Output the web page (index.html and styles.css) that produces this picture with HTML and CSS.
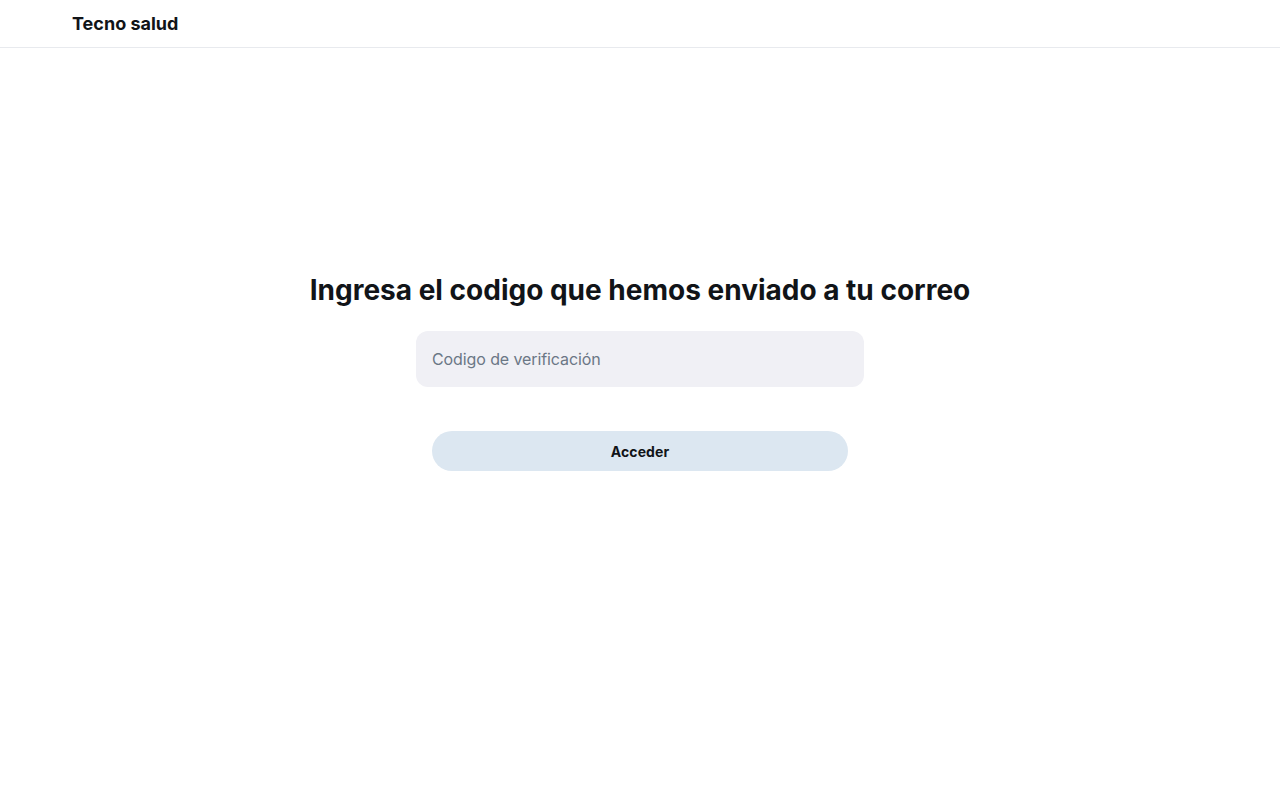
FILE: index.html
```html
<!DOCTYPE html>
<html lang="es">
<head>
<meta charset="utf-8">
<title>Tecno salud</title>
<link rel="stylesheet" href="styles.css">
</head>
<body>
<header class="topbar">
  <div class="brand">Tecno salud</div>
</header>
<main class="main">
  <div class="content">
    <h2 class="title">Ingresa el codigo que hemos enviado a tu correo</h2>
    <div class="field-row">
      <input class="field" type="text" placeholder="Codigo de verificación">
    </div>
    <div class="button-row">
      <button class="btn" type="button">Acceder</button>
    </div>
  </div>
</main>
</body>
</html>
```
FILE: styles.css
```css
* { box-sizing: border-box; }
html, body { margin: 0; padding: 0; background: #ffffff; }
body {
  font-family: Inter, "Noto Sans", sans-serif;
  color: #111418;
  min-height: 800px;
}
.topbar {
  height: 48px;
  border-bottom: 1px solid #e8eaee;
  display: flex;
  align-items: center;
  padding: 0 72px;
}
.brand {
  font-size: 18px;
  font-weight: 700;
  line-height: 23px;
}
.main {
  display: flex;
  justify-content: center;
  padding-top: 205px;
}
.content {
  width: 960px;
  display: flex;
  flex-direction: column;
  align-items: center;
}
.title {
  margin: 0;
  padding: 20px 16px 11px;
  font-size: 28px;
  font-weight: 700;
  line-height: 35px;
  text-align: center;
}
.field-row {
  width: 480px;
  padding: 12px 16px;
}
.field {
  display: block;
  width: 100%;
  height: 56px;
  border: none;
  outline: none;
  border-radius: 12px;
  background: #f0f0f5;
  padding: 16px;
  font-family: inherit;
  font-size: 16px;
  letter-spacing: -0.1px;
  color: #111418;
}
.field::placeholder { color: #6b7785; }
.button-row {
  width: 480px;
  padding: 32px 32px 12px;
}
.btn {
  display: block;
  width: 100%;
  height: 40px;
  border: none;
  border-radius: 20px;
  background: #dce7f1;
  color: #111418;
  font-family: inherit;
  font-size: 14px;
  font-weight: 700;
  letter-spacing: 0.1px;
  cursor: pointer;
}
```
